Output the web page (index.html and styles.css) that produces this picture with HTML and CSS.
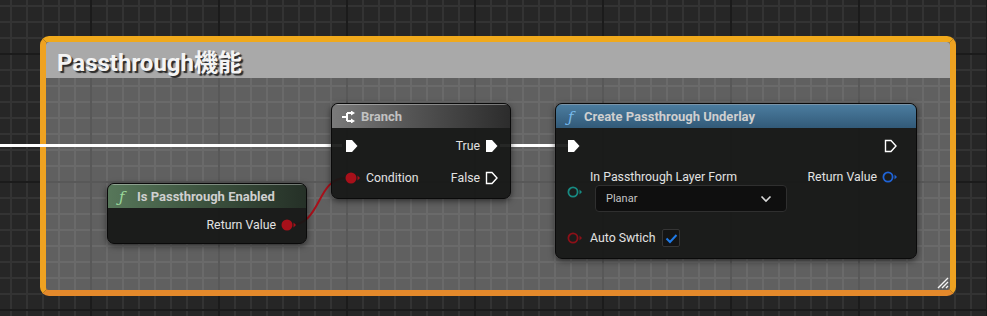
FILE: index.html
```html
<!DOCTYPE html>
<html lang="ja">
<head>
  <meta charset="UTF-8">
  <title>Blueprint | Passthrough</title>
  <link rel="stylesheet" href="styles.css">
</head>
<body>
  <div class="graph">

    <!-- COMMENT BOX -->
    <div class="comment">
      <div class="comment-title">Passthrough機能</div>
      <div class="comment-body">
        <svg class="resize" width="14" height="14" viewBox="0 0 14 14">
          <path d="M13 3 L3 13 M13 7 L7 13 M13 11 L11 13" stroke="#f4f4f4" stroke-width="1.4"/>
        </svg>
      </div>
    </div>

    <!-- WIRES -->
    <svg class="wires" width="987" height="316">
      <line x1="0" y1="145.5" x2="342" y2="145.5" stroke="#fff" stroke-width="3"/>
      <line x1="500" y1="145.5" x2="570" y2="145.5" stroke="#fff" stroke-width="3"/>
      <path d="M290 225 C 322 225, 316 178, 346 178" stroke="#a8101a" stroke-width="2" fill="none"/>
    </svg>

    <!-- BRANCH -->
    <div class="node node-branch">
      <div class="node-head head-gray">
        <svg width="14" height="12" viewBox="0 0 14 12">
          <path d="M0 6 H5 M5 2 V10 M5 2 H10 M5 10 H10" stroke="#fff" stroke-width="2" fill="none"/>
          <path d="M9 -0.5 L13 2 L9 4.5 Z M9 7.5 L13 10 L9 12.5 Z" fill="#fff"/>
        </svg>
        <span>Branch</span>
      </div>
      <div class="node-body">
        <div class="row">
          <svg class="pin" width="14" height="14" viewBox="0 0 14 14"><path d="M1 1 H7 L12.5 7 L7 13 H1 Z" fill="#fff"/></svg>
        </div>
        <div class="row right">
          <span>True</span>
          <svg class="pin" width="14" height="14" viewBox="0 0 14 14"><path d="M1 1 H7 L12.5 7 L7 13 H1 Z" fill="#fff"/></svg>
        </div>
        <div class="row">
          <svg class="pin" width="16" height="14" viewBox="0 0 16 14"><circle cx="6" cy="7" r="5.5" fill="#a8101a"/><path d="M12.5 4.5 L15 7 L12.5 9.5 Z" fill="#a8101a"/></svg>
          <span>Condition</span>
        </div>
        <div class="row right">
          <span>False</span>
          <svg class="pin" width="14" height="14" viewBox="0 0 14 14"><path d="M1.5 1.5 H7 L12 7 L7 12.5 H1.5 Z" fill="none" stroke="#fff" stroke-width="1.4"/></svg>
        </div>
      </div>
    </div>

    <!-- IS PASSTHROUGH ENABLED -->
    <div class="node node-enabled">
      <div class="node-head head-green">
        <span class="fn fn-green">ƒ</span>
        <span>Is Passthrough Enabled</span>
      </div>
      <div class="node-body single">
        <div class="row right">
          <span>Return Value</span>
          <svg class="pin" width="16" height="14" viewBox="0 0 16 14"><circle cx="6" cy="7" r="5.5" fill="#a8101a"/><path d="M12.5 4.5 L15 7 L12.5 9.5 Z" fill="#a8101a"/></svg>
        </div>
      </div>
    </div>

    <!-- CREATE PASSTHROUGH UNDERLAY -->
    <div class="node node-create">
      <div class="node-head head-blue">
        <span class="fn fn-blue">ƒ</span>
        <span>Create Passthrough Underlay</span>
      </div>
      <div class="node-body create-body">
        <div class="row">
          <svg class="pin" width="14" height="14" viewBox="0 0 14 14"><path d="M1 1 H7 L12.5 7 L7 13 H1 Z" fill="#fff"/></svg>
        </div>
        <div class="row right">
          <svg class="pin" width="14" height="14" viewBox="0 0 14 14"><path d="M1.5 1.5 H7 L12 7 L7 12.5 H1.5 Z" fill="none" stroke="#fff" stroke-width="1.4"/></svg>
        </div>

        <div class="param">
          <svg class="pin" width="16" height="14" viewBox="0 0 16 14"><circle cx="6" cy="7" r="4.6" fill="none" stroke="#178a82" stroke-width="1.8"/><path d="M12.5 4.5 L15 7 L12.5 9.5 Z" fill="#178a82"/></svg>
          <div class="param-stack">
            <span class="param-label">In Passthrough Layer Form</span>
            <div class="dropdown">
              <span>Planar</span>
              <svg width="12" height="8" viewBox="0 0 12 8"><path d="M1.5 1.5 L6 6 L10.5 1.5" stroke="#d8d8d8" stroke-width="1.6" fill="none"/></svg>
            </div>
          </div>
        </div>
        <div class="row right ret">
          <span>Return Value</span>
          <svg class="pin" width="16" height="14" viewBox="0 0 16 14"><circle cx="6" cy="7" r="4.6" fill="none" stroke="#1f63d6" stroke-width="1.8"/><path d="M12.5 4.5 L15 7 L12.5 9.5 Z" fill="#1f63d6"/></svg>
        </div>

        <div class="row switch">
          <svg class="pin" width="16" height="14" viewBox="0 0 16 14"><circle cx="6" cy="7" r="4.6" fill="none" stroke="#8c1018" stroke-width="1.8"/><path d="M12.5 4.5 L15 7 L12.5 9.5 Z" fill="#8c1018"/></svg>
          <span>Auto Swtich</span>
          <div class="checkbox">
            <svg width="13" height="11" viewBox="0 0 13 11"><path d="M1.5 5.5 L5 9 L11.5 2" stroke="#1f7ae6" stroke-width="2" fill="none"/></svg>
          </div>
        </div>
      </div>
    </div>

  </div>
</body>
</html>
```

FILE: styles.css
```css
body {
  margin: 0;
  width: 987px;
  height: 316px;
  overflow: hidden;
  font-family: Roboto, "Noto Sans CJK JP", sans-serif;
  font-size: 12.3px;
  color: #e2e2e2;
  background-color: #262626;
  background-image:
    linear-gradient(90deg, #1b1b1b 2px, transparent 2px),
    linear-gradient(#1b1b1b 2px, transparent 2px),
    linear-gradient(90deg, #333 2px, transparent 2px),
    linear-gradient(#333 2px, transparent 2px);
  background-size: 128px 128px, 128px 128px, 16px 16px, 16px 16px;
  background-position: 90px 0, 0 53px, 10px 0, 0 5px;
}
.graph {
  position: relative;
  width: 987px;
  height: 316px;
}

/* comment box */
.comment {
  position: absolute;
  left: 40px;
  top: 36px;
  width: 904px;
  height: 248px;
  border: 6px solid;
  border-color: #f0a91c #eea221 #e4892b #eea221;
  border-radius: 9px;
  display: flex;
  flex-direction: column;
  overflow: hidden;
}
.comment-title {
  height: 36px;
  background: #a9a9a9;
  padding-left: 11px;
  display: flex;
  align-items: center;
  font-size: 24px;
  font-weight: bold;
  color: #f4f4f4;
  text-shadow: 2px 2px 1px #2a2a2a;
}
.comment-body {
  flex: 1;
  background: rgba(255, 255, 255, 0.27);
  position: relative;
}
.resize {
  position: absolute;
  right: 1px;
  bottom: 1px;
}

.wires {
  position: absolute;
  left: 0;
  top: 0;
}

/* nodes */
.node {
  position: absolute;
  border-radius: 7px;
  background: rgba(22, 23, 22, 0.93);
  border: 1px solid #0a0a0a;
  box-shadow: 0 2px 6px rgba(0, 0, 0, 0.55);
  overflow: hidden;
}
.node-head {
  height: 23px;
  display: flex;
  align-items: center;
  gap: 6px;
  padding: 0 10px;
  font-size: 13px;
  font-weight: bold;
  color: #cfcfcf;
  border-top: 1px solid rgba(255, 255, 255, 0.35);
}
.head-gray {
  background: linear-gradient(90deg, #7a7a7a, #545454 45%, #2c2c2c);
  color: #c2c2c2;
}
.head-green {
  background: linear-gradient(90deg, #57775a, #3c523e 50%, #253027);
}
.head-blue {
  background: linear-gradient(180deg, #4b7c9f, #325a78);
}
.fn {
  font-family: "DejaVu Serif", serif;
  font-style: italic;
  font-size: 15px;
  font-weight: normal;
  width: 10px;
}
.fn-green {
  color: #9ad79a;
}
.fn-blue {
  color: #76b8ea;
}

.node-body {
  display: grid;
  grid-template-columns: 1fr auto;
  row-gap: 12px;
  padding: 8px 11px 10px 13px;
}
.node-body.single {
  grid-template-columns: 1fr;
  padding: 7px 9px 8px 13px;
}
.row {
  height: 20px;
  display: flex;
  align-items: center;
  gap: 5px;
}
.row.right {
  justify-content: flex-end;
}

.node-branch {
  left: 331px;
  top: 103px;
  width: 178px;
}
.node-branch .node-head {
  gap: 5px;
}
.node-enabled {
  left: 107px;
  top: 183px;
  width: 198px;
}
.node-enabled .node-head {
  padding-left: 11px;
  gap: 8px;
}
.node-create {
  left: 555px;
  top: 103px;
  width: 360px;
}
.node-create .node-head {
  padding-left: 12px;
  gap: 6px;
}

.create-body {
  row-gap: 0;
  padding: 8px 18px 10px 11px;
}
.param {
  margin-top: 13px;
  display: flex;
  align-items: center;
  gap: 7px;
}
.param .pin {
  margin-top: 2px;
}
.param-stack {
  display: flex;
  flex-direction: column;
}
.param-label {
  height: 16px;
  line-height: 16px;
}
.dropdown {
  width: 166px;
  height: 25px;
  margin-left: 5px;
  background: #0f0f0f;
  border: 1px solid #2f2f2f;
  border-radius: 4px;
  display: flex;
  align-items: center;
  justify-content: space-between;
  padding: 0 14px 0 10px;
  font-size: 11px;
  color: #c4c4c4;
}
.ret {
  margin-top: 13px;
  height: 16px;
}
.switch {
  margin-top: 16px;
  gap: 7px;
}
.checkbox {
  width: 16px;
  height: 16px;
  background: #141414;
  border: 1px solid #353535;
  border-radius: 2px;
  display: flex;
  align-items: center;
  justify-content: center;
}
```
